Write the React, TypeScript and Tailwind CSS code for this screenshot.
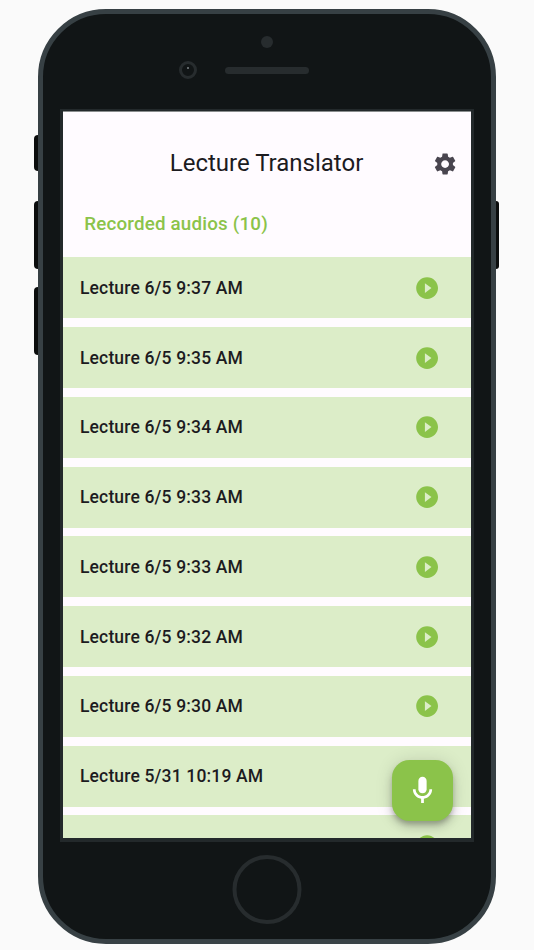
import { MdPlayCircleFilled, MdSettings } from "react-icons/md";

const lectures = [
  "Lecture 6/5 9:37 AM",
  "Lecture 6/5 9:35 AM",
  "Lecture 6/5 9:34 AM",
  "Lecture 6/5 9:33 AM",
  "Lecture 6/5 9:33 AM",
  "Lecture 6/5 9:32 AM",
  "Lecture 6/5 9:30 AM",
  "Lecture 5/31 10:19 AM",
  "",
];

function SideButtons() {
  return (
    <>
      <div className="absolute -left-[9px] top-[120.5px] h-[36px] w-[3.5px] rounded-l-sm bg-[#0b0d0d]" />
      <div className="absolute -left-[9px] top-[187px] h-[68px] w-[3.5px] rounded-l-sm bg-[#0b0d0d]" />
      <div className="absolute -left-[9px] top-[273px] h-[68px] w-[3.5px] rounded-l-sm bg-[#0b0d0d]" />
      <div className="absolute -right-[8px] top-[187px] h-[68px] w-[3px] rounded-r-sm bg-[#0b0d0d]" />
    </>
  );
}

function Speaker() {
  return (
    <div className="flex h-[95px] flex-col items-center pt-[22px]">
      <div className="h-3 w-3 rounded-full bg-[#272c2e]" />
      <div className="mt-[13px] flex items-center gap-7 pr-[46px]">
        <div className="flex h-[18px] w-[18px] justify-center rounded-full border-[3.5px] border-[#272c2e] pt-[2.5px]">
          <div className="h-0.5 w-0.5 bg-[#62686a]" />
        </div>
        <div className="h-[7px] w-[84px] rounded-full bg-[#272c2e]" />
      </div>
    </div>
  );
}

function MicIcon() {
  return (
    <svg viewBox="0 0 24 24" fill="currentColor" className="h-[33px] w-[33px] text-white">
      <path d="M12 14c1.66 0 3-1.34 3-3V5c0-1.66-1.34-3-3-3S9 3.34 9 5v6c0 1.66 1.34 3 3 3z" />
      <path d="M17 11c0 2.76-2.24 5-5 5s-5-2.24-5-5H5c0 3.53 2.61 6.43 6 6.92V21h2v-3.08c3.39-.49 6-3.39 6-6.92h-2z" />
    </svg>
  );
}

function LectureRow({ name }: { name: string }) {
  return (
    <li className="flex h-[61px] shrink-0 items-center justify-between bg-[#dcedc8] pl-[17.2px] pr-[31px]">
      <span className="text-[17.5px] font-medium tracking-[0.16px] text-[#1c1b1f]">{name}</span>
      <MdPlayCircleFilled className="ml-auto h-[26.2px] w-[26.2px] text-[#8bc34a]" />
    </li>
  );
}

export default function App() {
  return (
    <div className="flex h-[950px] w-[534px] items-start justify-center overflow-hidden bg-[#fafafa] pt-[9px] font-[Roboto,sans-serif]">
      <div className="relative h-[934.5px] w-[458px] rounded-[68px] border-[5.5px] border-[#374044] bg-[#111516]">
        <SideButtons />
        <Speaker />

        <div className="relative mx-auto flex h-[733px] w-[414.5px] flex-col overflow-hidden border-x-[3px] border-b-4 border-t-2 border-[#23292b] bg-[#fffbff] shadow-[inset_0_1px_0_#8a8d8e]">
          <header className="flex shrink-0 items-start pl-[107px] pr-[13.5px] pt-[34px]">
            <h1 className="text-[24px] leading-9 text-[#1c1b1f]">Lecture Translator</h1>
            <button className="ml-auto mt-[6px]" aria-label="Settings">
              <MdSettings className="h-[26.2px] w-[26.2px] text-[#49454f]" />
            </button>
          </header>

          <h2 className="mt-[29px] shrink-0 pl-[21.5px] text-[18.8px] font-medium leading-7 tracking-[0.18px] text-[#8bc34a]">
            Recorded audios (10)
          </h2>

          <ul className="mt-[19.4px] flex flex-col gap-[8.75px]">
            {lectures.map((name, i) => (
              <LectureRow key={i} name={name} />
            ))}
          </ul>

          <button
            className="absolute bottom-[17.5px] right-[18px] flex h-[61px] w-[61px] items-center justify-center rounded-[17.5px] bg-[#8bc34a] shadow-[0_4px_5px_-1px_rgba(0,0,0,0.2),0_6px_10px_rgba(0,0,0,0.14),0_1px_18px_rgba(0,0,0,0.12)]"
            aria-label="Record"
          >
            <MicIcon />
          </button>
        </div>

        <div className="mx-auto mt-[12.5px] h-[69px] w-[69px] -translate-x-[0.5px] rounded-full border-4 border-[#272c2e]" />
      </div>
    </div>
  );
}
